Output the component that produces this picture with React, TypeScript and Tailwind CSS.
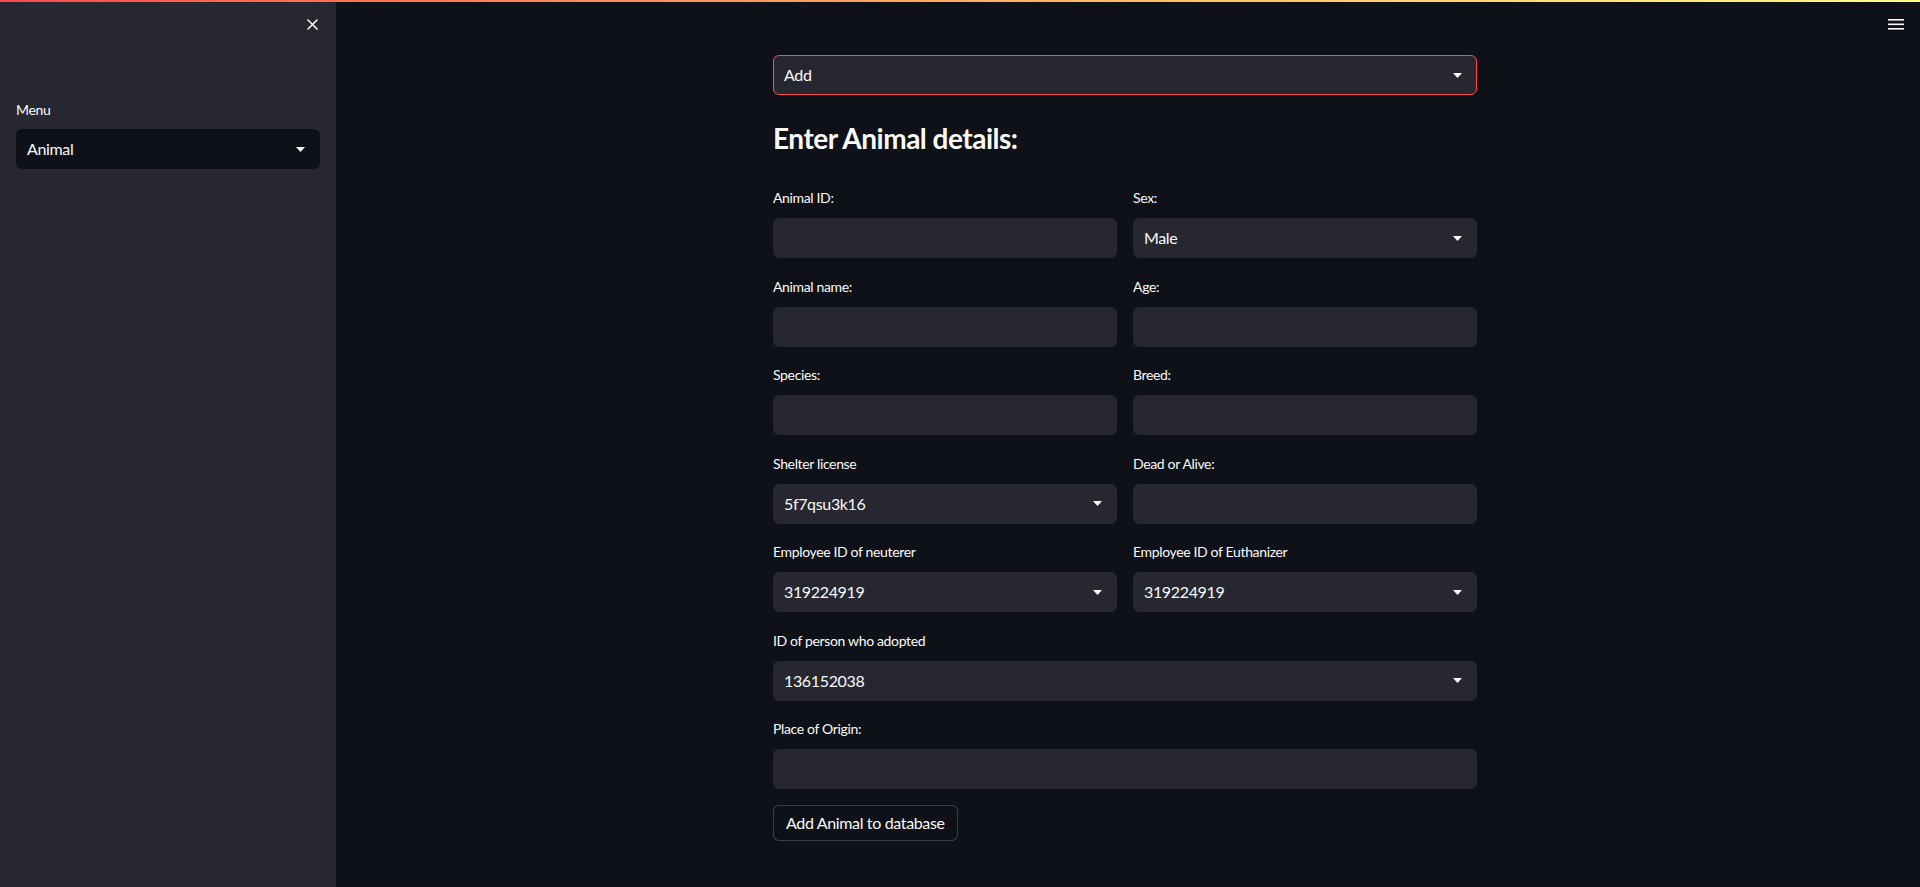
import React from "react";

function Caret() {
  return (
    <svg width="9" height="5" viewBox="0 0 9 5" className="shrink-0">
      <path d="M0 0H9L4.5 5Z" fill="#fafafa" />
    </svg>
  );
}

function SelectBox({ value, className = "" }: { value: string; className?: string }) {
  return (
    <div
      className={`flex h-10 items-center justify-between rounded-md border border-[#262730] bg-[#262730] pl-[10px] pr-[14px] text-base text-[#fafafa] ${className}`}
    >
      <span>{value}</span>
      <Caret />
    </div>
  );
}

function TextBox() {
  return <div className="h-10 rounded-md border border-[#262730] bg-[#262730]" />;
}

function Field({ label, children, wide = false }: { label: string; children: React.ReactNode; wide?: boolean }) {
  return (
    <div className={`flex flex-col ${wide ? "col-span-2" : ""}`}>
      <div className="mb-2 flex h-6 items-center text-sm text-[#fafafa]">{label}</div>
      {children}
    </div>
  );
}

function Sidebar() {
  return (
    <aside className="flex w-[336px] shrink-0 flex-col bg-[#262730] px-4">
      <div className="flex justify-end pr-[2px] pt-[17px]">
        <svg width="11" height="11" viewBox="0 0 11 11">
          <path d="M1 1L10 10M10 1L1 10" stroke="#fafafa" strokeWidth="1.6" strokeLinecap="round" />
        </svg>
      </div>
      <div className="mt-[68px] mb-[7px] flex h-6 items-center text-sm text-[#fafafa]">Menu</div>
      <div className="flex h-10 items-center justify-between rounded-md bg-[#0e1117] pl-[11px] pr-[15px] text-base text-[#fafafa]">
        <span>Animal</span>
        <Caret />
      </div>
    </aside>
  );
}

export default function App() {
  return (
    <div className="flex h-screen flex-col overflow-hidden bg-[#0e1117] font-[Lato,sans-serif] tracking-[-0.35px] text-[#fafafa] antialiased">
      <div className="h-[2px] shrink-0 bg-gradient-to-r from-[#ff4b4b] to-[#fffd80]" />
      <div className="flex min-h-0 flex-1">
        <Sidebar />
        <main className="relative flex flex-1 justify-center pr-[6px]">
          <button className="absolute right-[16px] top-[17px]" aria-label="menu">
            <svg width="16" height="11" viewBox="0 0 16 11" className="block">
              <rect x="0" y="0" width="16" height="1.6" fill="#fafafa" />
              <rect x="0" y="4.5" width="16" height="1.6" fill="#fafafa" />
              <rect x="0" y="9" width="16" height="1.6" fill="#fafafa" />
            </svg>
          </button>
          <div className="flex w-[704px] flex-col gap-4 pt-[53px]">
            <SelectBox value="Add" className="border-[#ff4b4b]" />
            <h3 className="pb-[15px] pt-[10px] text-[28px] font-bold leading-[34px] tracking-[-0.5px]">
              Enter Animal details:
            </h3>
            <div className="grid grid-cols-2 gap-x-4 gap-y-[16.5px]">
              <Field label="Animal ID:">
                <TextBox />
              </Field>
              <Field label="Sex:">
                <SelectBox value="Male" />
              </Field>
              <Field label="Animal name:">
                <TextBox />
              </Field>
              <Field label="Age:">
                <TextBox />
              </Field>
              <Field label="Species:">
                <TextBox />
              </Field>
              <Field label="Breed:">
                <TextBox />
              </Field>
              <Field label="Shelter license">
                <SelectBox value="5f7qsu3k16" />
              </Field>
              <Field label="Dead or Alive:">
                <TextBox />
              </Field>
              <Field label="Employee ID of neuterer">
                <SelectBox value="319224919" />
              </Field>
              <Field label="Employee ID of Euthanizer">
                <SelectBox value="319224919" />
              </Field>
              <Field label="ID of person who adopted" wide>
                <SelectBox value="136152038" />
              </Field>
              <Field label="Place of Origin:" wide>
                <TextBox />
              </Field>
            </div>
            <div>
              <button className="h-[36px] rounded-md border border-[#fafafa]/20 bg-[#0e1117] px-3 text-base text-[#fafafa]">
                Add Animal to database
              </button>
            </div>
          </div>
        </main>
      </div>
    </div>
  );
}
